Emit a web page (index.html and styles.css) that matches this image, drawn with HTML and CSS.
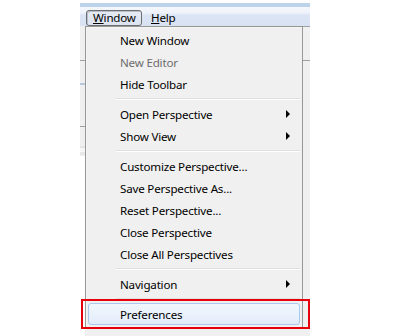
FILE: index.html
```html
<!DOCTYPE html>
<html>
<head>
<meta charset="utf-8">
<link rel="stylesheet" href="styles.css">
</head>
<body>
<div class="window">
  <div class="titlestrip"></div>
  <div class="menubar">
    <span class="mb-item pressed"><u>W</u>indow</span>
    <span class="mb-item"><u>H</u>elp</span>
  </div>
  <div class="content">
    <div class="leftcol">
      <div class="lc lc-a"></div>
      <div class="lc lc-b"></div>
      <div class="lc lc-c"></div>
      <div class="lc lc-d"></div>
    </div>
    <div class="midcol"></div>
    <div class="rightcol">
      <div class="rc-a"></div>
    </div>
  </div>
  <div class="menu">
    <div class="item">New Window</div>
    <div class="item disabled">New Editor</div>
    <div class="item">Hide Toolbar</div>
    <div class="sep"></div>
    <div class="item">Open Perspective<span class="arrow"></span></div>
    <div class="item">Show View<span class="arrow"></span></div>
    <div class="sep"></div>
    <div class="item">Customize Perspective...</div>
    <div class="item">Save Perspective As...</div>
    <div class="item">Reset Perspective...</div>
    <div class="item">Close Perspective</div>
    <div class="item">Close All Perspectives</div>
    <div class="sep"></div>
    <div class="item">Navigation<span class="arrow"></span></div>
    <div class="sep"></div>
    <div class="item hot">Preferences</div>
  </div>
  <div class="redbox"></div>
</div>
</body>
</html>
```

FILE: styles.css
```css
html, body {
  margin: 0;
  padding: 0;
  background: #ffffff;
}
body {
  font-family: "Noto Sans", "Open Sans", sans-serif;
  font-size: 11.6px;
  letter-spacing: -0.2px;
  color: #000;
}
.window {
  position: relative;
  margin: 3px 0 0 80px;
  width: 230px;
  height: 333px;
}
.titlestrip {
  height: 4px;
  background: #bdd3ec;
}
.menubar {
  height: 19px;
  background: linear-gradient(#f6f8fc 0%, #eef2fa 30%, #dbe4f4 45%, #d9e2f3 100%);
  display: flex;
  align-items: center;
  padding-left: 6px;
  box-sizing: border-box;
}
.mb-item {
  height: 16px;
  line-height: 14px;
  padding: 0 6px 0 6px;
  margin-right: 2px;
  box-sizing: border-box;
  border: 1px solid transparent;
  margin-top: 2px;
}
.mb-item.pressed {
  width: 56px;
  border-color: #6e6e6e;
  border-radius: 3px;
  background: linear-gradient(#e5eaf3, #dde4f1);
  box-shadow: inset 1px 1px 0 #b8bfcc;
  padding-left: 6px;
}
.content {
  display: flex;
  height: 310px;
}
.leftcol {
  width: 5px;
  position: relative;
  background: linear-gradient(#f0f0f0 0, #f0f0f0 130px, #ffffff 130px);
}
.lc { position: absolute; left: 0; width: 5px; }
.lc-a { top: 34px; height: 1px; background: #a0a0a0; }
.lc-b { top: 57px; height: 2px; background: #b7c8dd; }
.lc-c { top: 100px; height: 1px; background: #a0a0a0; }
.lc-d { top: 120px; height: 9px; background: linear-gradient(#e4e4e4 0, #e4e4e4 2px, #f7f7f7 2px, #f7f7f7 6px, #e8e8e8 6px); }
.midcol {
  flex: 1;
  background: #f0f0f0;
}
.rightcol {
  width: 8px;
  background: #f0f0f0;
  position: relative;
  border-top: 1px solid #a0a0a0;
  box-sizing: border-box;
}
.rc-a { position: absolute; top: 33px; left: 0; width: 8px; height: 1px; background: #a0a0a0; }
.menu {
  position: absolute;
  left: 5px;
  top: 23px;
  width: 218px;
  height: 302px;
  box-sizing: border-box;
  border: 1px solid #979797;
  background: #f0f0f0;
  box-shadow: inset 1px 1px 0 #f5f5f5;
  padding-top: 2px;
}
.item {
  height: 22px;
  display: flex;
  align-items: center;
  padding-left: 34px;
  box-sizing: border-box;
  white-space: nowrap;
}
.item.disabled { color: #6d6d6d; }
.arrow {
  margin-left: auto;
  margin-right: 12px;
  width: 0;
  height: 0;
  border-top: 4px solid transparent;
  border-bottom: 4px solid transparent;
  border-left: 4px solid #000;
}
.sep {
  height: 8px;
  margin: 0 2px 0 30px;
  position: relative;
}
.sep::after {
  content: "";
  position: absolute;
  left: 0;
  right: 0;
  top: 3px;
  height: 1px;
  background: #e0e0e0;
  border-bottom: 1px solid #ffffff;
}
.item.hot {
  margin: 0 2px;
  padding-left: 31px;
  border: 1px solid #a9c9ee;
  border-radius: 3px;
  background: linear-gradient(#f2f7fd, #e2ecf9);
}
.redbox {
  position: absolute;
  left: 1px;
  top: 296px;
  width: 229px;
  height: 30px;
  box-sizing: border-box;
  border: 2px solid #e6000b;
}
```
